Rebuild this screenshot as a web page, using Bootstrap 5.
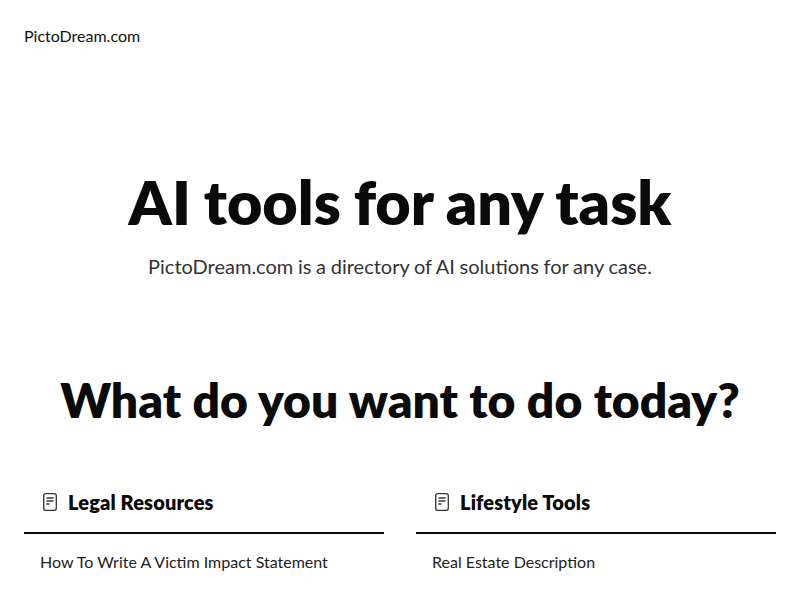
<!DOCTYPE html>
<html lang="en"><head><meta charset="utf-8">
<link href="https://cdn.jsdelivr.net/npm/bootstrap@5.3.0/dist/css/bootstrap.min.css" rel="stylesheet">
<style>
html,body{height:600px;overflow:hidden}
body{font-family:Lato,sans-serif;color:#0a0a0a;background:#fff}
.brandline{font-size:16px;color:#111;padding:26px 24px 0;line-height:20px}
.hero-title{font-family:Lato,sans-serif;font-weight:800;font-size:61px;word-spacing:-1.25px;line-height:72px;margin:0;padding-top:120px;color:#0a0a0a}
.hero-sub{font-size:20px;word-spacing:-.44px;line-height:28px;margin:0;padding-top:14px;color:#333}
.ask-title{font-family:Lato,sans-serif;font-weight:800;font-size:48px;word-spacing:.3px;line-height:58px;margin:0;padding-top:91px;color:#0a0a0a}
.cols{padding:0 24px;margin-top:42px;gap:32px}
.colhead{border-bottom:2px solid #0a0a0a;height:63px;padding:0 0 0 19px;gap:11px}
.colhead h2{font-family:Lato,sans-serif;font-size:20px;letter-spacing:.13px;font-weight:800;margin:0;color:#0a0a0a}
.item{font-size:16px;color:#222;padding:18px 16px 0;line-height:20px}
</style></head><body>
<div class="brandline">PictoDream.com</div>
<h1 class="hero-title text-center">AI tools for any task</h1>
<p class="hero-sub text-center">PictoDream.com is a directory of AI solutions for any case.</p>
<h2 class="ask-title text-center">What do you want to do today?</h2>
<div class="cols d-flex">
<div class="flex-fill w-50">
<div class="colhead d-flex align-items-center"><svg width="14" height="18" viewBox="0 0 14 18" fill="none" stroke="#333" stroke-width="1.3"><rect x=".7" y=".7" width="12.6" height="16.6" rx="2"/><path d="M3.5 5h7M3.5 8h7M3.5 11h3"/></svg><h2>Legal Resources</h2></div>
<div class="item">How To Write A Victim Impact Statement</div>
</div>
<div class="flex-fill w-50">
<div class="colhead d-flex align-items-center"><svg width="14" height="18" viewBox="0 0 14 18" fill="none" stroke="#333" stroke-width="1.3"><rect x=".7" y=".7" width="12.6" height="16.6" rx="2"/><path d="M3.5 5h7M3.5 8h7M3.5 11h3"/></svg><h2>Lifestyle Tools</h2></div>
<div class="item">Real Estate Description</div>
</div>
</div>
<script src="https://cdn.jsdelivr.net/npm/bootstrap@5.3.0/dist/js/bootstrap.bundle.min.js"></script>
</body></html>
